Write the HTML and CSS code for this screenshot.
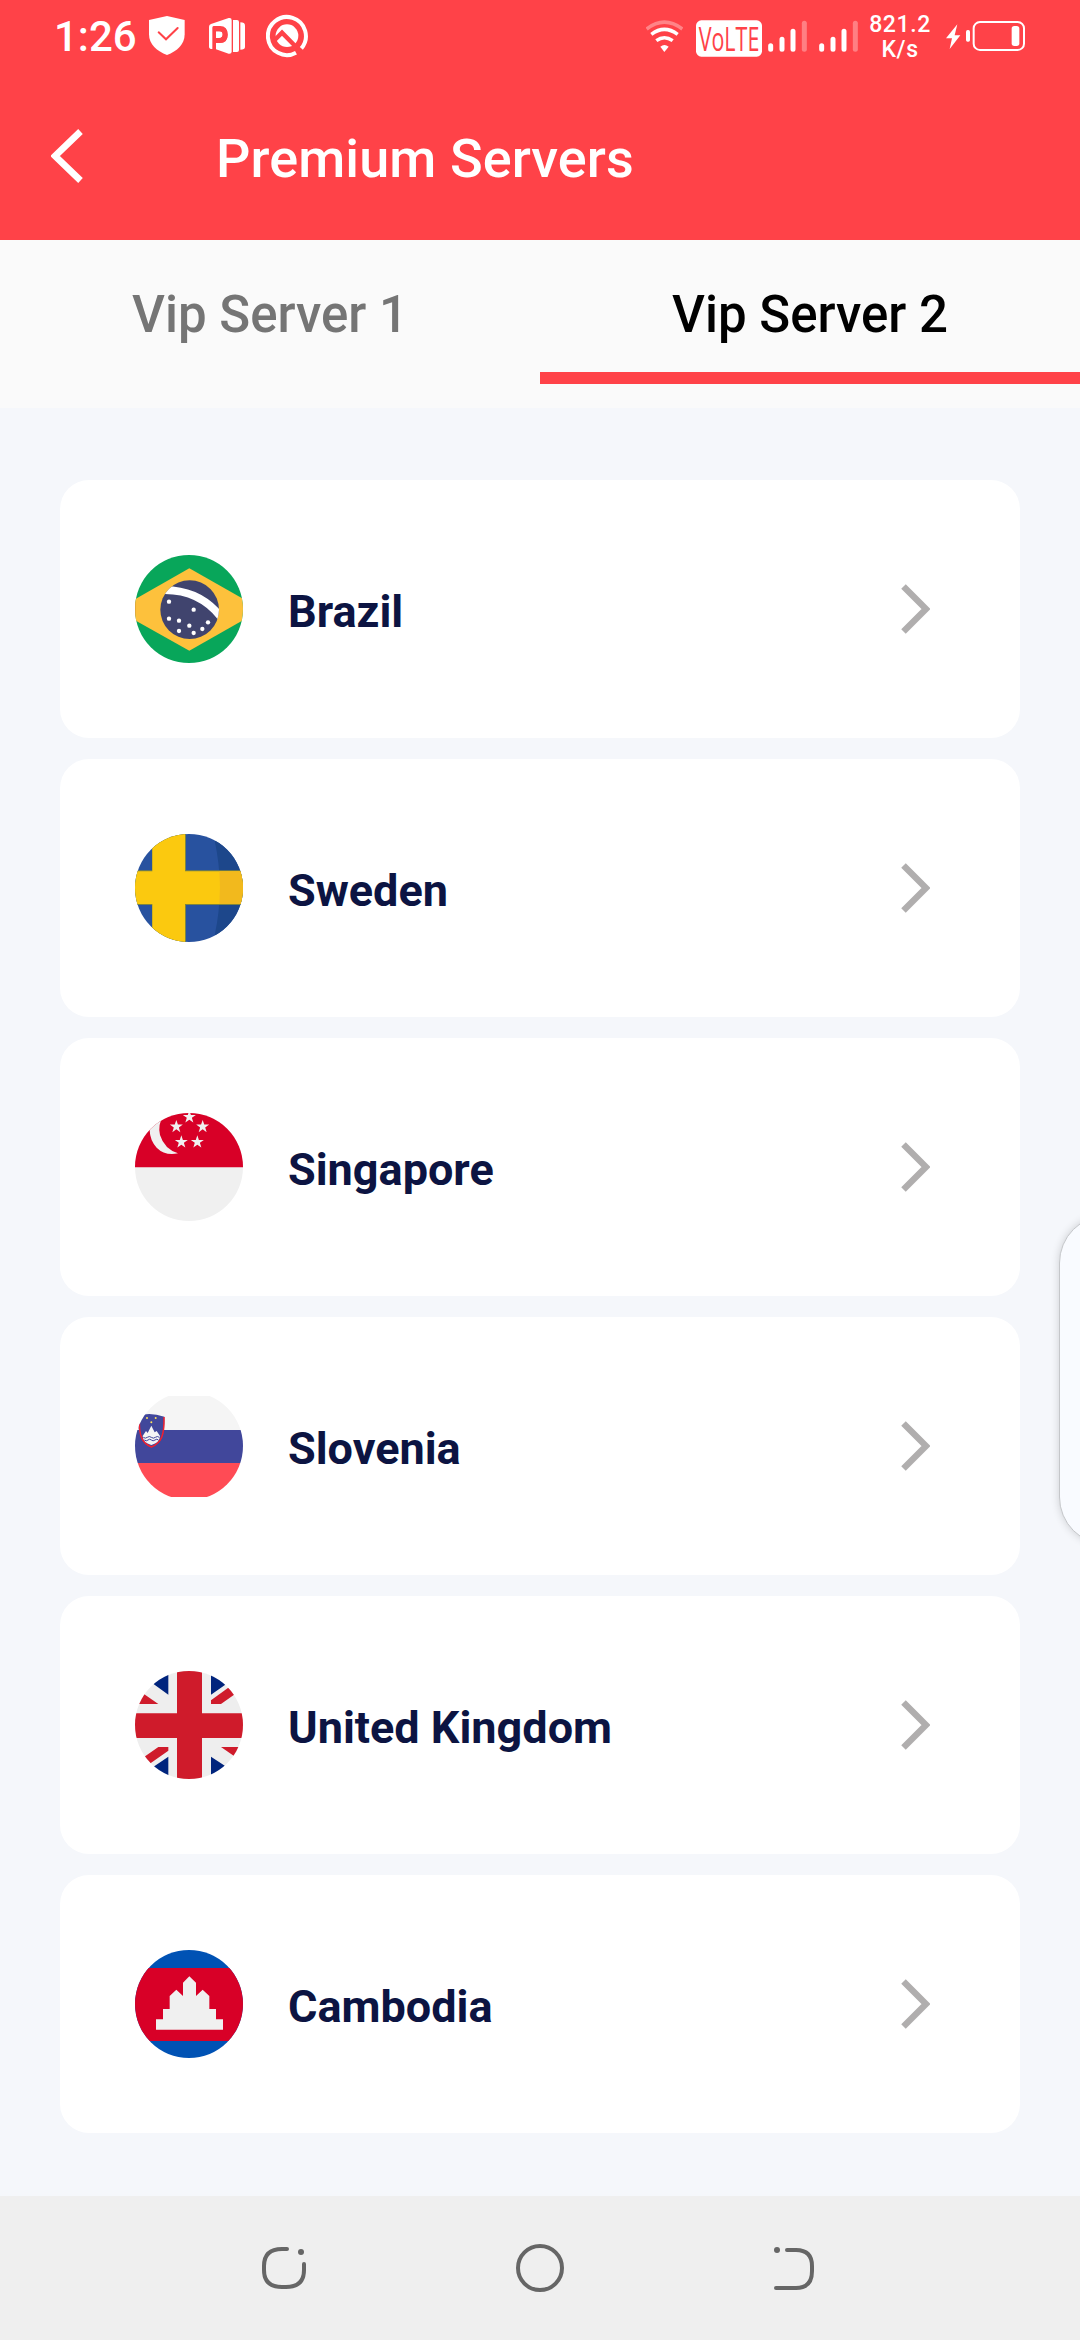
FILE: index.html
```html
<!DOCTYPE html>
<html lang="en">
<head>
<meta charset="utf-8">
<title>Premium Servers</title>
<link rel="stylesheet" href="styles.css">
</head>
<body>
<div class="screen">
  <header class="top">
    <div class="status">
      <div class="status-left">
        <span class="clock">1:26</span>
        <svg class="shield" viewBox="447 42 108 132" width="36" height="44"><path d="M501 48L554 60V103C554 134 531 154 501 165C471 154 447 134 447 103V60Z" fill="#fff"/><path d="M476 97L498 118L533 84" fill="none" stroke="#ff4248" stroke-width="6" stroke-linecap="round"/></svg>
        <svg class="slides" viewBox="627 42 108 132" width="36" height="44"><path d="M627 80Q627 74 633 72L686 54Q695 52 695 61V155Q695 162 686 161L648 148V129H659Q683 129 683 104Q683 78 660 78H641Q637 78 637 83V147Q627 147 627 140Z" fill="#fff"/><path d="M648 94H657Q668 92 668 103Q668 114 657 114H648Z" fill="#fff"/><path d="M639 80H660Q683 80 683 104Q683 129 659 129H648V156H639ZM648 94V114H657Q668 114 668 104Q668 94 657 94Z" fill="#ff4248" fill-rule="evenodd"/><path d="M699 60H711Q717 60 717 66V150Q717 156 711 156H699ZM721 67Q735 67 735 77V141Q735 149 721 149Z" fill="#fff"/></svg>
        <svg class="quick" viewBox="798 42 126 132" width="42" height="44"><path d="M888 158A57 57 0 1 1 904 145" fill="none" stroke="#fff" stroke-width="12"/><circle cx="861" cy="107" r="34" fill="#fff"/><path d="M822 122L846 98L892 145" fill="none" stroke="#ff4248" stroke-width="13"/></svg>
      </div>
      <div class="status-right">
        <svg class="wifi" viewBox="48 42 111 132" width="37" height="44"><g fill="none" stroke="#fff" stroke-width="10.500"><path d="M50 87Q103 46 157 87" opacity=".35"/><path d="M64 103Q103 73 143 103"/><path d="M79 122Q103 104 128 122"/></g><path d="M91 140Q103 130 116 140L103 156Z" fill="#fff"/></svg>
        <svg class="volte" viewBox="198 42 198 132" width="66" height="44"><rect x="198" y="61" width="198" height="109" rx="16" fill="#fff"/><text class="volte-text" x="206" y="153" textLength="182" lengthAdjust="spacingAndGlyphs">VoLTE</text></svg>
        <svg class="signal" viewBox="414 42 117 132" width="39" height="44"><g stroke="#fff" stroke-width="15" stroke-linecap="round"><path d="M422 137V148M456 118V148M489 94V148"/><path d="M523 70V148" opacity=".32"/></g></svg>
        <svg class="signal second" viewBox="414 42 117 132" width="39" height="44"><g stroke="#fff" stroke-width="15" stroke-linecap="round"><path d="M422 137V148M456 118V148M489 94V148"/><path d="M523 70V148" opacity=".32"/></g></svg>
        <span class="speed">821.2<br>K/s</span>
        <svg class="battery" viewBox="948 42 237 132" width="79" height="44"><path d="M982 73L948 115H966L959 147L991 106H974Z" fill="#fff"/><rect x="1008" y="90" width="12" height="35" rx="5" fill="#fff"/><rect x="1031" y="66" width="151" height="84" rx="19" fill="none" stroke="#fff" stroke-width="6"/><rect x="1145" y="78" width="23" height="60" rx="8" fill="#fff"/></svg>
      </div>
    </div>
    <div class="toolbar">
      <svg class="back" viewBox="0 0 32 54" width="32" height="54"><path d="M29.500 2.500L4 27L29.500 51.500" fill="none" stroke="#fff" stroke-width="6.600"/></svg>
      <h1 class="title">Premium Servers</h1>
    </div>
  </header>

  <nav class="tabs">
    <div class="tab">Vip Server 1</div>
    <div class="tab active">Vip Server 2</div>
  </nav>

  <main class="list">
    <div class="card">
      <svg class="flag" viewBox="0 0 324 324"><defs><clipPath id="round"><circle cx="162" cy="162" r="162"/></clipPath><clipPath id="globe"><circle cx="164" cy="164" r="88"/></clipPath></defs><g clip-path="url(#round)"><path fill="#08a65a" d="M0 0H324V324H0Z"/><path fill="#fdc13c" d="M0 133L163 40L324 131V196L163 287L0 196Z"/><path fill="#e3a83c" d="M0 133H3V196H0Z"/><circle cx="164" cy="164" r="88" fill="#40446e"/><g clip-path="url(#globe)"><path d="M75 106C150 102 212 128 258 186" fill="none" stroke="#fff" stroke-width="23"/></g><g fill="#fff"><circle cx="102" cy="140" r="6.500"/><circle cx="176" cy="164" r="6.500"/><circle cx="102" cy="191" r="6.500"/><circle cx="132" cy="197" r="6.500"/><circle cx="163" cy="212" r="6.500"/><circle cx="132" cy="228" r="6.500"/><circle cx="176" cy="234" r="6.500"/><circle cx="202" cy="222" r="6.500"/><circle cx="219" cy="202" r="6.500"/></g></g></svg>
      <span class="name">Brazil</span>
      <svg class="chevron" viewBox="0 0 29 50"><path d="M2.500 2.500L25 25L2.500 47.500" fill="none" stroke="#b0aeae" stroke-width="6.400"/></svg>
    </div>
    <div class="card">
      <svg class="flag" viewBox="0 0 324 324"><g clip-path="url(#round)"><path fill="#28529f" d="M0 0H324V324H0Z"/><path fill="#1d478b" d="M239 20Q270 160 239 304L324 324V0Z"/><path fill="#7d853f" d="M0 109H51V0H153V109H324V213H153V324H51V213H0Z"/><path fill="#fbc90f" d="M0 112H52V0H150V112H324V210H150V324H52V210H0Z"/><path fill="#f2b91d" d="M253 112H324V210H253Q257 160 253 112Z"/></g></svg>
      <span class="name">Sweden</span>
      <svg class="chevron" viewBox="0 0 29 50"><path d="M2.500 2.500L25 25L2.500 47.500" fill="none" stroke="#b0aeae" stroke-width="6.400"/></svg>
    </div>
    <div class="card">
      <svg class="flag" viewBox="0 0 324 324"><defs><path id="star" d="M0 -20L4.700 -6.200H19.500L7.600 2.400L12 16.500L0 8L-12 16.500L-7.600 2.400L-19.500 -6.200H-4.700Z"/></defs><g clip-path="url(#round)"><path fill="#f0f0f0" d="M0 0H324V324H0Z"/><path fill="#d80027" d="M0 0H324V163H0Z"/><path fill="#f0f0f0" d="M83 14Q68 34 75 66Q88 108 129 121Q90 129 65 104Q45 83 44 52V0Z"/><g fill="#f0f0f0"><use href="#star" x="163" y="12"/><use href="#star" x="124" y="41"/><use href="#star" x="203" y="41"/><use href="#star" x="139" y="87"/><use href="#star" x="187" y="87"/></g></g></svg>
      <span class="name">Singapore</span>
      <svg class="chevron" viewBox="0 0 29 50"><path d="M2.500 2.500L25 25L2.500 47.500" fill="none" stroke="#b0aeae" stroke-width="6.400"/></svg>
    </div>
    <div class="card">
      <svg class="flag" viewBox="0 0 324 324"><g clip-path="url(#round)"><path fill="#f5f5f5" d="M0 12H324V114H0Z"/><path fill="#41479b" d="M0 114H324V213H0Z"/><path fill="#ff4b55" d="M0 213H324V315H0Z"/><path fill="#41479b" d="M10 71Q45 59 88 74C89 130 82 154 49 167C16 154 9 130 10 71Z"/><path d="M87 75C88 128 81 152 49 165C19 152 13 128 13 90" fill="none" stroke="#f0202f" stroke-width="4.500"/><path fill="#f5f5f5" d="M23 132L33 117L38 123L49 101L59 121L65 117L75 132Q74 152 49 159Q24 152 23 132Z"/><path d="M25 136Q31 141 37 136T49 136T61 136T73 136M28 144Q34 149 39 144T49 144T60 144T70 144" fill="none" stroke="#41479b" stroke-width="3"/><g fill="#ffe15a"><circle cx="36" cy="78" r="3"/><circle cx="62" cy="78" r="3"/><circle cx="49" cy="91" r="3"/></g></g></svg>
      <span class="name">Slovenia</span>
      <svg class="chevron" viewBox="0 0 29 50"><path d="M2.500 2.500L25 25L2.500 47.500" fill="none" stroke="#b0aeae" stroke-width="6.400"/></svg>
    </div>
    <div class="card">
      <svg class="flag" viewBox="0 0 324 324"><g clip-path="url(#round)"><path fill="#eee" d="M0 0H324V324H0Z"/><path fill="#00247d" d="M100 0V71L40 28V0ZM228 0V71L290 28V0ZM100 324V257L40 298V324ZM228 324V257L290 298V324Z"/><path fill="#cf1b2b" d="M0 50L30 71L70 99H0ZM228 99V88L286 46L310 62L258 99ZM100 228V239L40 281L10 270L70 228ZM258 228H324V274Z"/><path fill="#cf1b2b" d="M126 0H201V127H324V201H201V324H126V201H0V127H126Z"/></g></svg>
      <span class="name">United Kingdom</span>
      <svg class="chevron" viewBox="0 0 29 50"><path d="M2.500 2.500L25 25L2.500 47.500" fill="none" stroke="#b0aeae" stroke-width="6.400"/></svg>
    </div>
    <div class="card">
      <svg class="flag" viewBox="0 0 324 324"><g clip-path="url(#round)"><path fill="#0052b4" d="M0 0H324V324H0Z"/><path fill="#d80027" d="M0 54H324V273H0Z"/><path fill="#f0f0f0" d="M63 239V208H84V177H104V138L124 119L144 138V98L163 79L183 98V138L203 119L223 138V177H243V208H264V239Z"/></g></svg>
      <span class="name">Cambodia</span>
      <svg class="chevron" viewBox="0 0 29 50"><path d="M2.500 2.500L25 25L2.500 47.500" fill="none" stroke="#b0aeae" stroke-width="6.400"/></svg>
    </div>
  </main>

  <footer class="navbar">
    <svg viewBox="0 0 60 60" width="60" height="60"><g fill="none" stroke="#666" stroke-width="4" stroke-linecap="round"><path d="M33 11H28Q10 11 10 28V32Q10 49 28 49H32Q50 49 50 32V26"/></g><circle cx="47" cy="14" r="3" fill="#666"/></svg>
    <svg viewBox="0 0 60 60" width="60" height="60"><circle cx="30" cy="30" r="22" fill="none" stroke="#666" stroke-width="4"/></svg>
    <svg viewBox="0 0 60 60" width="60" height="60"><path d="M21 12H30Q46 12 46 28V33Q46 50 30 50H10" fill="none" stroke="#666" stroke-width="4" stroke-linecap="round"/><circle cx="11" cy="12" r="3" fill="#666"/></svg>
  </footer>
  <div class="edge-panel"></div>
</div>
</body>
</html>
```
FILE: styles.css
```css
* {
  box-sizing: border-box;
}

body {
  margin: 0;
  font-family: Roboto, sans-serif;
}

svg {
  display: block;
  flex: none;
}

.screen {
  position: relative;
  display: flex;
  flex-direction: column;
  width: 1080px;
  height: 2340px;
  overflow: hidden;
  background: #f5f7fb;
}

.top {
  height: 240px;
  background: #ff4248;
  color: #fff;
}

.status {
  display: flex;
  justify-content: space-between;
  height: 72px;
  padding: 14px 55px 0 54px;
}

.status-left,
.status-right {
  display: flex;
  align-items: flex-start;
}

.clock {
  width: 95px;
  font-size: 42px;
  font-weight: 500;
  line-height: 46px;
  white-space: nowrap;
}

.slides {
  margin-left: 24px;
}

.quick {
  margin-left: 21px;
}

.volte {
  margin-left: 13px;
  overflow: visible;
}

.volte-text {
  font-family: "Open Sans", sans-serif;
  font-size: 96px;
  fill: #ff4248;
}

.signal {
  margin-left: 6px;
}

.signal.second {
  margin-left: 12px;
}

.speed {
  width: 64px;
  margin: -1px 14px 0 10px;
  font-size: 23px;
  font-weight: 500;
  line-height: 24.5px;
  letter-spacing: 0.6px;
  text-align: center;
  white-space: nowrap;
}

.toolbar {
  display: flex;
  align-items: center;
  height: 168px;
  padding-left: 51px;
}

.title {
  margin: 6px 0 0 133px;
  font-size: 54px;
  font-weight: 500;
  line-height: 64px;
  letter-spacing: 0.08px;
  white-space: nowrap;
}

.tabs {
  display: flex;
  height: 168px;
  padding-bottom: 24px;
  background: #fafafa;
}

.tab {
  flex: 1;
  padding-top: 45px;
  border-bottom: 12px solid transparent;
  color: #757575;
  font-size: 51px;
  font-weight: 500;
  line-height: 60px;
  text-align: center;
}

.tab.active {
  border-color: #ff4248;
  color: #000;
}

.list {
  display: flex;
  flex: 1;
  flex-direction: column;
  gap: 21px;
  padding: 72px 60px 0;
}

.card {
  display: flex;
  align-items: center;
  height: 258px;
  padding: 0 90px 0 75px;
  border-radius: 29px;
  background: #fff;
}

.flag {
  width: 108px;
  height: 108px;
}

.name {
  flex: 1;
  margin: 6px 0 0 45px;
  color: #0c1442;
  font-size: 45px;
  font-weight: 700;
  line-height: 54px;
}

.chevron {
  width: 29px;
  height: 50px;
}

.navbar {
  display: flex;
  align-items: center;
  justify-content: center;
  gap: 196px;
  height: 144px;
  background: #efefef;
}

.edge-panel {
  position: absolute;
  top: 1215px;
  left: 1059px;
  width: 100px;
  height: 330px;
  border: 1px solid #c5c7ca;
  border-radius: 48px;
  background: #f9fbff;
  box-shadow: 0 0 8px rgba(0, 0, 0, 0.16);
}
```
